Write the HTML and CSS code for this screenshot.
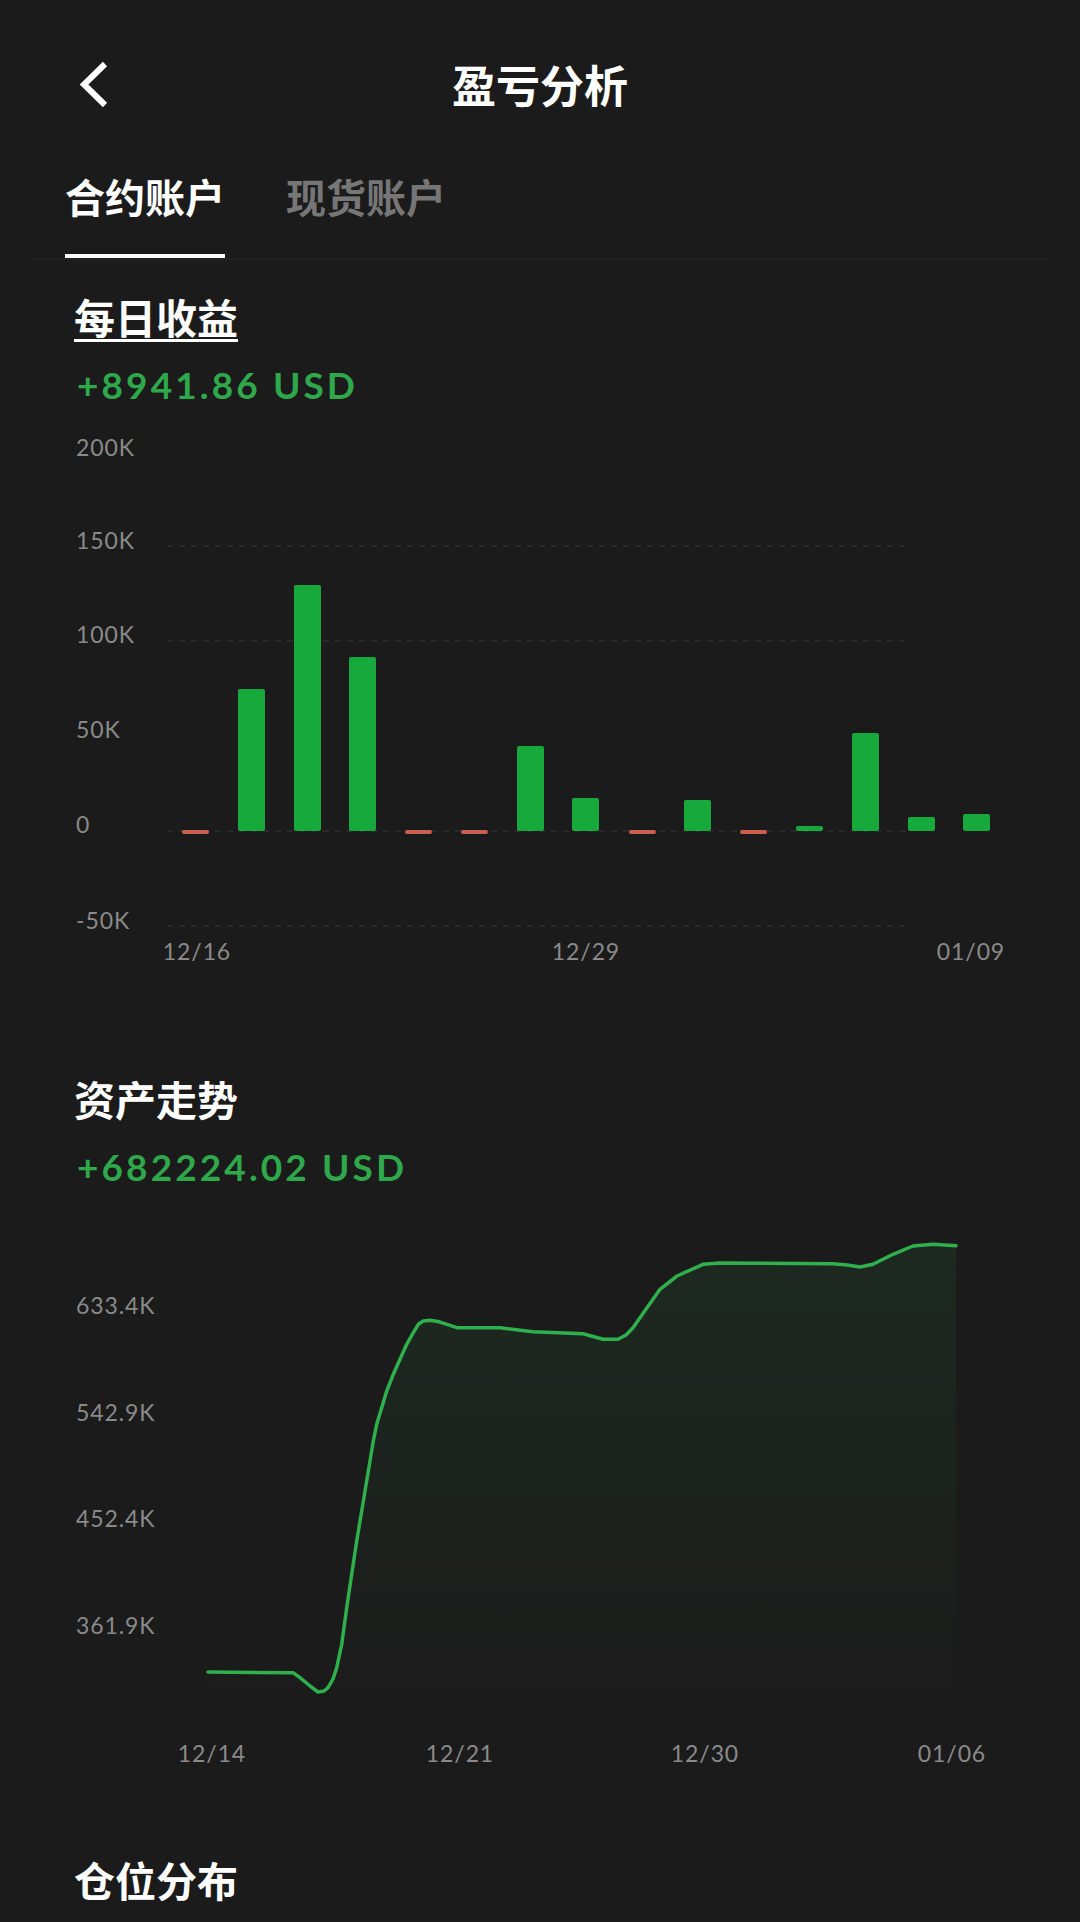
FILE: index.html
```html
<!DOCTYPE html>
<html lang="zh-CN">
<head>
<meta charset="utf-8">
<title>盈亏分析</title>
<link rel="stylesheet" href="styles.css">
</head>
<body>
<div class="page">
  <header class="topbar">
    <svg class="back" viewBox="0 0 32 48" aria-label="返回"><path d="M26 4 L5 24.5 L26 45" fill="none" stroke="#fff" stroke-width="6"/></svg>
    <h1 class="title">盈亏分析</h1>
    <span></span>
  </header>

  <nav class="tabs">
    <div class="tab active">合约账户</div>
    <div class="tab">现货账户</div>
  </nav>

  <section class="sec">
    <h2 class="sec-title underlined">每日收益</h2>
    <div class="value">+8941.86 USD</div>
    <svg class="chart chart-bar" viewBox="0 0 1080 560">
      <g class="grid">
        <line x1="167" y1="126" x2="909" y2="126"/>
        <line x1="167" y1="221" x2="909" y2="221"/>
        <line x1="167" y1="411" x2="909" y2="411"/>
        <line x1="167" y1="506" x2="909" y2="506"/>
      </g>
      <g class="axis">
        <text x="76" y="36">200K</text>
        <text x="76" y="129">150K</text>
        <text x="76" y="223">100K</text>
        <text x="76" y="318">50K</text>
        <text x="76" y="413">0</text>
        <text x="76" y="509">-50K</text>
      </g>
      <g class="bars-up">
        <rect x="238" y="269" width="27" height="142" rx="2"/>
        <rect x="294" y="165" width="27" height="246" rx="2"/>
        <rect x="349" y="237" width="27" height="174" rx="2"/>
        <rect x="517" y="326" width="27" height="85" rx="2"/>
        <rect x="572" y="378" width="27" height="33" rx="2"/>
        <rect x="684" y="380" width="27" height="31" rx="2"/>
        <rect x="796" y="406" width="27" height="5" rx="2"/>
        <rect x="852" y="313" width="27" height="98" rx="2"/>
        <rect x="908" y="397" width="27" height="14" rx="2"/>
        <rect x="963" y="394" width="27" height="17" rx="2"/>
      </g>
      <g class="bars-down">
        <rect x="182" y="410" width="27" height="4" rx="2"/>
        <rect x="405" y="410" width="27" height="4" rx="2"/>
        <rect x="461" y="410" width="27" height="4" rx="2"/>
        <rect x="629" y="410" width="27" height="4" rx="2"/>
        <rect x="740" y="410" width="27" height="4" rx="2"/>
      </g>
      <g class="axis" text-anchor="middle">
        <text x="197" y="540">12/16</text>
        <text x="586" y="540">12/29</text>
        <text x="971" y="540">01/09</text>
      </g>
    </svg>
  </section>

  <section class="sec">
    <h2 class="sec-title sec-title-2">资产走势</h2>
    <div class="value">+682224.02 USD</div>
    <svg class="chart chart-line" viewBox="0 0 1080 590">
      <defs>
        <linearGradient id="fillg" x1="0" y1="0" x2="0" y2="1">
          <stop offset="0" stop-color="#2fae4e" stop-opacity="0.10"/>
          <stop offset="1" stop-color="#2fae4e" stop-opacity="0"/>
        </linearGradient>
      </defs>
      <g class="axis">
        <text x="76" y="113">633.4K</text>
        <text x="76" y="220">542.9K</text>
        <text x="76" y="326">452.4K</text>
        <text x="76" y="433">361.9K</text>
      </g>
      <path class="area" d="M208,471 L293,471.7 L300,476.7 L310,485 L318,491 L324,490 L328,486.7 L333,478 L336.7,466.7 L341.7,443.3 L346.7,406.7 L351.7,373.3 L356.7,340 L361.7,310 L365,290 L370,260 L373.3,240 L376.7,223.3 L381.7,206.7 L386.7,190 L393.3,173.3 L400,158.3 L406.7,143.3 L413.3,131.7 L418.3,123.3 L423.3,120 L430,119.3 L438,120.5 L447,123.3 L457,126.7 L500,126.7 L533,130.7 L583,132.7 L603,138.3 L618,138.3 L626,134 L633,126.7 L647,106.7 L660,88.3 L677,75 L703,63.3 L720,62 L833,62.7 L847,64 L860,66 L873,63.3 L893,53.3 L913,45 L933,43.3 L956,44.7 L956,500 L208,500 Z"/>
      <path class="line" d="M208,471 L293,471.7 L300,476.7 L310,485 L318,491 L324,490 L328,486.7 L333,478 L336.7,466.7 L341.7,443.3 L346.7,406.7 L351.7,373.3 L356.7,340 L361.7,310 L365,290 L370,260 L373.3,240 L376.7,223.3 L381.7,206.7 L386.7,190 L393.3,173.3 L400,158.3 L406.7,143.3 L413.3,131.7 L418.3,123.3 L423.3,120 L430,119.3 L438,120.5 L447,123.3 L457,126.7 L500,126.7 L533,130.7 L583,132.7 L603,138.3 L618,138.3 L626,134 L633,126.7 L647,106.7 L660,88.3 L677,75 L703,63.3 L720,62 L833,62.7 L847,64 L860,66 L873,63.3 L893,53.3 L913,45 L933,43.3 L956,44.7"/>
      <g class="axis" text-anchor="middle">
        <text x="212" y="561">12/14</text>
        <text x="460" y="561">12/21</text>
        <text x="705" y="561">12/30</text>
        <text x="952" y="561">01/06</text>
      </g>
    </svg>
  </section>

  <section class="sec">
    <h2 class="sec-title sec-title-3">仓位分布</h2>
  </section>
</div>
</body>
</html>
```

FILE: styles.css
```css
html, body {
  margin: 0;
  padding: 0;
  background: #1b1b1b;
}

body {
  font-family: "Noto Sans CJK SC", "Noto Sans", sans-serif;
  color: #ffffff;
  width: 1080px;
  min-height: 1922px;
  overflow: hidden;
}

.topbar {
  display: grid;
  grid-template-columns: 1fr auto 1fr;
  align-items: center;
  height: 167px;
}

.back {
  display: block;
  width: 32px;
  height: 48px;
  margin-left: 79px;
}

.title {
  margin: 0;
  font-size: 44px;
  font-weight: 700;
  line-height: 52px;
}

.tabs {
  display: flex;
  gap: 61px;
  margin: 5px 31px 0;
  padding: 0 34px;
  border-bottom: 2px solid #222222;
}

.tab {
  font-size: 40px;
  font-weight: 700;
  line-height: 48px;
  padding-bottom: 34px;
  border-bottom: 4px solid transparent;
  color: #767676;
}

.tab.active {
  color: #ffffff;
  border-bottom-color: #ffffff;
}

.sec-title {
  margin: 32px 0 0 74px;
  font-size: 41px;
  font-weight: 700;
  line-height: 48px;
}

.sec-title-2 {
  margin-top: 94px;
}

.sec-title-3 {
  margin-top: 64px;
}

.underlined {
  text-decoration: underline;
  text-decoration-thickness: 3px;
  text-underline-offset: 5px;
}

.value {
  margin: 23px 0 0 77px;
  font-family: "Lato", "Noto Sans", sans-serif;
  font-weight: 700;
  font-size: 37px;
  letter-spacing: 3.1px;
  line-height: 44px;
  color: #2ea84a;
}

.chart {
  display: block;
  width: 1080px;
}

.chart-bar {
  height: 560px;
  margin-top: 13px;
}

.chart-line {
  height: 590px;
  margin-top: 12px;
}

.grid line {
  stroke: #303030;
  stroke-width: 1.5;
  stroke-dasharray: 6 6;
}

.axis {
  font-family: "Lato", "Noto Sans", sans-serif;
  font-size: 23px;
  font-weight: 400;
  letter-spacing: 0.9px;
  fill: #8a8a8a;
}

.bars-up rect {
  fill: #18a93d;
}

.bars-down rect {
  fill: #c9604d;
}

.area {
  fill: url(#fillg);
}

.line {
  fill: none;
  stroke: #2fb04d;
  stroke-width: 3.5;
  stroke-linejoin: round;
  stroke-linecap: round;
}
```
